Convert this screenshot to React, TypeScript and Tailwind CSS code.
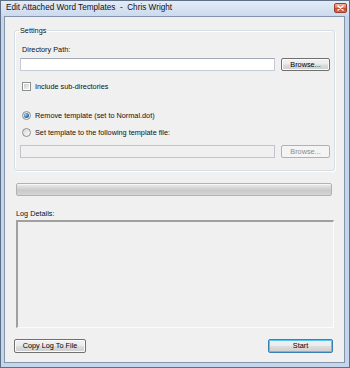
import React from 'react';
import clsx from 'clsx';

// Win7 style push button
const WinButton = ({
  label,
  className,
  disabled,
  focused,
}: {
  label: string;
  className?: string;
  disabled?: boolean;
  focused?: boolean;
}) => (
  <div
    className={clsx(
      'flex items-center justify-center rounded-[2px] border leading-[12px]',
      disabled
        ? 'border-[#adb2b5] bg-[#f4f4f4] text-[#8d8d8d]'
        : 'bg-[linear-gradient(#f2f2f2_0%,#ebebeb_48%,#dddddd_52%,#cfcfcf_100%)] text-black',
      !disabled && !focused && 'border-[#707070] shadow-[inset_0_0_0_1px_#fbfbfb]',
      focused && 'border-[#3c7fb1] shadow-[inset_0_0_0_1px_#56c4f3]',
      className
    )}
  >
    {label}
  </div>
);

const Radio = ({ checked, label }: { checked?: boolean; label: string }) => (
  <div className="flex items-center h-[9px] gap-[4px] pl-[7px]">
    <span className="w-[9px] h-[9px] rounded-full border border-[#8e8f8f] bg-[linear-gradient(135deg,#d6d8db,#fbfbfb)] flex items-center justify-center">
      {checked && (
        <span className="w-[5px] h-[5px] rounded-full bg-[radial-gradient(circle_at_35%_35%,#9ad8f8,#2a6aa8_60%,#1b4c80)]" />
      )}
    </span>
    <span className="leading-[9px]">{label}</span>
  </div>
);

export default function App() {
  return (
    <div className="w-[350px] h-[368px] border border-[#5f6f86] bg-[#c4d6eb] flex flex-col font-['Liberation_Sans',Arial,sans-serif] text-[7.3px] text-[#111] select-none">
      {/* Title bar */}
      <div className="h-[15px] flex items-start bg-gradient-to-b from-[#e3ecf8] to-[#cbdaed] pl-[5px] pr-[2px]">
        <span className="leading-[13px] text-[8.2px] whitespace-pre">
          Edit Attached Word Templates  -  Chris Wright
        </span>
        <div className="ml-auto mt-[2px] w-[13px] h-[10px] rounded-[2px] border border-[#9a3d2c] bg-[linear-gradient(#f0b4a0_0%,#e07c5e_45%,#cf4a2c_55%,#d86a4c_100%)] flex items-center justify-center">
          <svg width="7" height="6" viewBox="0 0 7 6">
            <path d="M1 1 L6 5 M6 1 L1 5" stroke="#fff" strokeWidth="1.5" strokeLinecap="round" />
          </svg>
        </div>
      </div>

      {/* Client area */}
      <div className="flex-1 pl-[3px] pr-[4px] pb-[4px] flex flex-col">
        <div className="flex-1 border border-[#8494aa] bg-[#f0f0f0] flex flex-col">
          {/* Settings group */}
          <fieldset className="mt-[9px] ml-[9px] w-[321px] border border-[#d5dfe5] rounded-[3px] pb-[12px] shadow-[inset_1px_1px_0_#fff,1px_1px_0_#fff]">
            <legend className="ml-[4px] px-[1px] leading-[9px]">Settings</legend>

            <div className="pt-[9px] pl-[7px] leading-[11px]">Directory Path:</div>
            <div className="mt-[3px] pl-[5px] flex">
              <div className="w-[255px] h-[13px] bg-white border border-[#c5cbd4] border-t-[#a3abb7]" />
              <WinButton label="Browse..." className="ml-[6px] w-[49px] h-[13px]" />
            </div>

            <div className="mt-[11px] pl-[7px] flex items-center h-[9px] gap-[4px]">
              <span className="w-[9px] h-[9px] border border-[#8e8f8f] bg-white p-[1px]">
                <span className="block w-full h-full bg-gradient-to-br from-[#c8ccd2] to-[#f4f4f4]" />
              </span>
              <span className="leading-[9px]">Include sub-directories</span>
            </div>

            <div className="mt-[20px]">
              <Radio checked label="Remove template (set to Normal.dot)" />
            </div>
            <div className="mt-[8px]">
              <Radio label="Set template to the following template file:" />
            </div>

            <div className="mt-[8px] pl-[5px] flex">
              <div className="w-[255px] h-[13px] bg-[#f0f0f0] border border-[#c2c6cc]" />
              <WinButton label="Browse..." disabled className="ml-[6px] w-[49px] h-[13px]" />
            </div>
          </fieldset>

          {/* Progress bar */}
          <div className="mt-[12px] ml-[11px] w-[316px] h-[13px] rounded-[2px] border border-[#b2b2b2] bg-[linear-gradient(#ececec_0%,#d4d4d4_40%,#c9c9c9_60%,#d6d6d6_100%)] shadow-[inset_0_1px_0_#f6f6f6]" />

          <div className="mt-[12px] ml-[11px] leading-[11px]">Log Details:</div>
          <div className="mt-[1px] ml-[11px] w-[318px] h-[108px] border-t-2 border-l-2 border-t-[#a0a0a0] border-l-[#a0a0a0] border-b border-r border-b-[#fcfcfc] border-r-[#fcfcfc] bg-[#f0f0f0]" />

          {/* Buttons */}
          <div className="mt-[11px] flex justify-between pl-[9px] pr-[11px]">
            <WinButton label="Copy Log To File" className="w-[72px] h-[14px]" />
            <WinButton label="Start" focused className="w-[65px] h-[14px]" />
          </div>
        </div>
      </div>
    </div>
  );
}
